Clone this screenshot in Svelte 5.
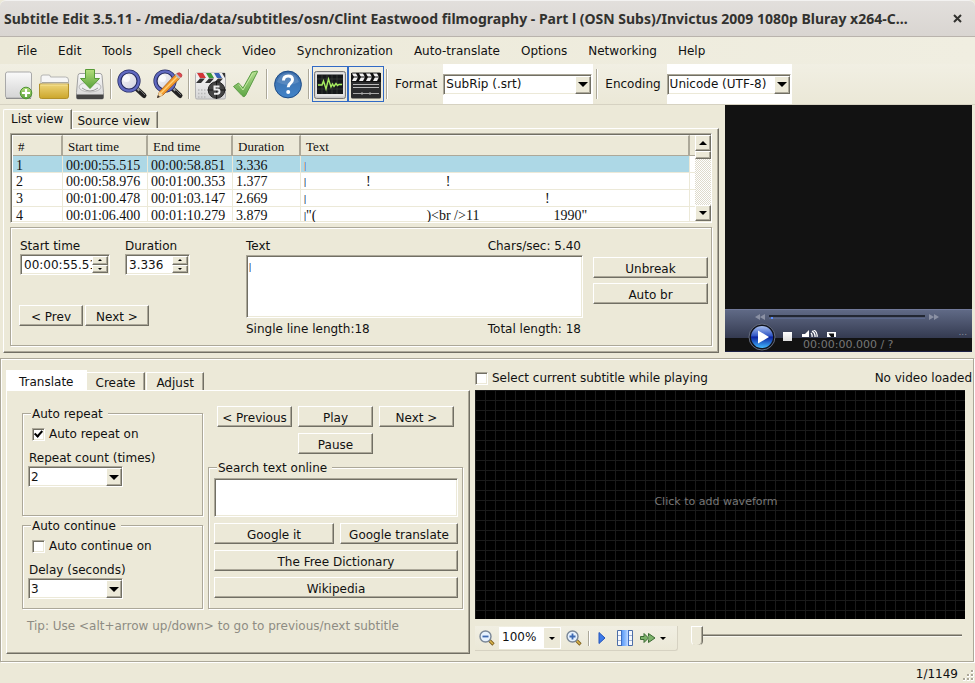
<script>
  const menus = ['File', 'Edit', 'Tools', 'Spell check', 'Video', 'Synchronization', 'Auto-translate', 'Options', 'Networking', 'Help'];

  const tools = [
    ['new', 'open', 'save'],
    ['find', 'replace'],
    ['sync', 'check'],
    ['help'],
    ['wave', 'video']
  ];

  const rows = [
    { n: 1, start: '00:00:55.515', end: '00:00:58.851', dur: '3.336', parts: [] },
    { n: 2, start: '00:00:58.976', end: '00:01:00.353', dur: '1.377', parts: [{ gap: 60, text: '!' }, { gap: 75, text: '!' }] },
    { n: 3, start: '00:01:00.478', end: '00:01:03.147', dur: '2.669', parts: [{ gap: 239, text: '!' }] },
    { n: 4, start: '00:01:06.400', end: '00:01:10.279', dur: '3.879', parts: [{ gap: 0, text: '"(' }, { gap: 110, text: ')<br />11' }, { gap: 74, text: '1990"' }] }
  ];

  let selected = $state(1);
  let startTime = $state('00:00:55.515');
  let duration = $state('3.336');
  let body = $state('');
  let query = $state('');
  let autoRepeat = $state(true);
  let autoContinue = $state(false);
  let follow = $state(false);
  let position = $state(0);
</script>

{#snippet combo(id, value, cls)}
  <span class="combo sunken {cls}">
    <select {id}><option>{value}</option></select>
    <span class="drop raised"><i class="down"></i></span>
  </span>
{/snippet}

{#snippet spinButtons(name)}
  <span class="spin">
    <button class="raised" aria-label="Increase {name}"><i class="up small"></i></button>
    <button class="raised" aria-label="Decrease {name}"><i class="down small"></i></button>
  </span>
{/snippet}

{#snippet icon(name)}
  <svg width="32" height="32" viewBox="0 0 32 32" aria-hidden="true">
    {#if name === 'new'}
      <rect x="3.5" y="4" width="26" height="26" rx="2" fill="url(#paper)" stroke="#a9a9a9" />
      <path d="M4 30.5h25" stroke="#8d8d8d" />
      <circle cx="24" cy="25" r="5.8" fill="url(#green)" stroke="#4f9334" />
      <path d="M24 21v8M20 25h8" stroke="#fff" stroke-width="2.2" />
    {:else if name === 'open'}
      <path d="M3 16V9q0-2 2-2h6q1.500 0 1.500 2h15q3 0 3 3v5z" fill="#f6f6f6" stroke="#b4b4b2" />
      <path d="M4 14.500h26" stroke="#aaa89e" />
      <path d="M1.500 16h29v12q0 2.500-2 2.500h-25q-2 0-2-2z" fill="url(#gold)" stroke="#b39129" />
      <path d="M2.500 17h27" stroke="#f6e49c" />
    {:else if name === 'save'}
      <path d="M4 7.500q.3-2 2-2h20q1.700 0 2 2l1.500 17v5q0 1.500-1.500 1.500H4q-1.500 0-1.500-1.500v-5z" fill="url(#paper)" stroke="#a0a0a0" />
      <ellipse cx="16" cy="19" rx="11" ry="5" fill="#eee" stroke="#bbb" />
      <path d="M2.500 26.500h27v3q0 1.500-1.500 1.500H4q-1.500 0-1.500-1.500z" fill="#444" />
      <path d="M8 20q8 6 16 0" fill="none" stroke="#999" />
      <path d="M11.500 1.500h9v9h5L16 20.500 6.500 10.500h5z" fill="url(#green)" stroke="#579b36" />
    {:else if name === 'find' || name === 'replace'}
      <path d="M21 21l7 6.500" stroke="#222" stroke-width="5" stroke-linecap="round" />
      <path d="M20 19l3.500 3.500" stroke="#999" stroke-width="2.500" />
      <path d="M23 21l6 6" stroke="#777" stroke-width="1" />
      <circle cx="13" cy="13" r="9.500" fill="url(#glass)" stroke="#262c62" stroke-width="4.200" />
      <circle cx="13" cy="13" r="9.700" fill="none" stroke="#6069c0" stroke-width="2.200" />
      <circle cx="10.500" cy="10.500" r="3.500" fill="#fff" opacity=".75" />
      {#if name === 'replace'}
        <path d="M5.500 29.500l2-6L23.500 6.500l4.200 4L11 27z" fill="#f39a2d" stroke="#a75e19" stroke-width=".8" />
        <path d="M9 25L25.500 8.500" stroke="#ffd277" stroke-width="1.500" />
        <path d="M5.500 29.500l2-6 3.500 3.500z" fill="#f2d6a2" />
        <path d="M5 30l1-3 2 2z" fill="#333" />
        <path d="M23 7l4 4 1.500-1.500-4-4z" fill="#b5bdc4" />
        <path d="M24.800 5.500l4 4q2-1.500 .7-3.500-2-2.400-4.700-.5z" fill="#df4850" stroke="#a72b31" stroke-width=".6" />
      {/if}
    {:else if name === 'sync'}
      <rect x="1.500" y="5" width="30" height="26" rx="1.500" fill="url(#paper)" stroke="#b2b2b2" />
      <path d="M2 5h29v5H2z" fill="#eee" />
      <path d="M3 5h6l3 5H6z" fill="#d23636" /><path d="M12 5h5l3 5h-5z" fill="#3c9938" /><path d="M20 5h5l3 5h-5z" fill="#3761b5" /><path d="M28 5h3v5z" fill="#333" />
      <path d="M6 10.500h5L7 15H2zM15 10.500h5L16 15h-5zM24 10.500h5L25 15h-5z" fill="#333" />
      <path d="M4 22h8M4 25.500h8M4 29h8" stroke="#b9b9b9" stroke-width="1.500" stroke-dasharray="1.500 1.500" />
      <circle cx="22.500" cy="22" r="8.300" fill="#444" stroke="#222" />
      <path d="M13.500 22h18.500M22.500 13v18" stroke="#171717" />
      <path d="M25.500 18.500h-5v3h3q2 0 2 2t-2 2.200h-3.500" fill="none" stroke="#eee" stroke-width="2" />
    {:else if name === 'check'}
      <path d="M3.500 18.500l5-3.500 4.500 5L22 4l5-1q.8 0 .4 1L15.500 27.500q-1.500 2.500-3.500 0z" fill="url(#tick)" stroke="#5b9c45" />
      <path d="M9 16.500l4 5.500L23 5" stroke="#c3e8a2" fill="none" />
    {:else if name === 'help'}
      <circle cx="16" cy="16.500" r="13.400" fill="url(#blue)" stroke="#1e4c87" />
      <path d="M5 14Q8 5 16 5t11 9Q16 20 5 14z" fill="#fff" opacity=".14" />
      <path d="M11.500 12.500q0-4.500 4.700-4.500 4.300 0 4.300 3.800 0 2-2.300 3.700-2 1.500-2 3.800" fill="none" stroke="#fff" stroke-width="3" />
      <circle cx="16.200" cy="24" r="2" fill="#fff" />
    {:else if name === 'wave'}
      <rect x=".5" y="3.500" width="31" height="27" rx="2" fill="#c9c9c9" stroke="#777" />
      <rect x="1.500" y="4.500" width="29" height="24" rx="1.500" fill="#e4e4e4" />
      <rect x="3" y="6.500" width="26" height="19.500" fill="#15181a" />
      <path d="M8 7v19M13 7v19M18 7v19M23 7v19M3 11h26M3 16h26M3 21h26" stroke="#394039" stroke-width=".7" />
      <path d="M4 17h4l1.500-4 2.500 8 2.500-10 2.500 8 1.500-3 1.500 2.500 2-3 1.500 2 1.500-1h3" fill="none" stroke="#a6ed5f" stroke-width="1.400" />
    {:else}
      <rect x="1" y="4.500" width="30" height="26" rx="1.500" fill="#2b2c2d" />
      <path d="M1 5h30v9H1z" fill="#111" />
      <path d="M2 5.500h4l2 3.500-2 4H2l2-4zM9 5.500h4l2 3.500-2 4H9l2-4zM16 5.500h4l2 3.500-2 4h-4l2-4zM23 5.500h4l2 3.500-2 4h-4l2-4z" fill="#f2f2f2" />
      <path d="M2 9h28" stroke="#111" />
      <path d="M3 16.500h26M3 19.500h26" stroke="#bbb" />
      <path d="M3 25.500h26M12 24v3M20 24v3" stroke="#aaa" />
    {/if}
  </svg>
{/snippet}

{#snippet lens(plus)}
  <svg width="16" height="16" viewBox="0 0 16 16" aria-hidden="true">
    <path d="M10 10l4.500 4.500" stroke="#7b5e1d" stroke-width="3.200" /><path d="M10.500 10.500l3.500 3.500" stroke="#ddb64d" stroke-width="1.600" />
    <circle cx="6.500" cy="6.500" r="5.500" fill="#e6f1fd" stroke="#7a8797" stroke-width="1.400" />
    <path d={plus ? 'M3.500 6.500h6M6.500 3.500v6' : 'M3.500 6.500h6'} stroke="#3d69b1" stroke-width="1.800" />
  </svg>
{/snippet}

<svg class="defs" aria-hidden="true">
  <defs>
    <linearGradient id="paper" x2="0" y2="1"><stop stop-color="#fafafa" /><stop offset="1" stop-color="#d4d4d4" /></linearGradient>
    <linearGradient id="green" x2="0" y2="1"><stop stop-color="#b4de7c" /><stop offset="1" stop-color="#58a13a" /></linearGradient>
    <linearGradient id="tick" x2="0" y2="1"><stop stop-color="#b2dd8f" /><stop offset="1" stop-color="#5ea645" /></linearGradient>
    <linearGradient id="gold" x2="0" y2="1"><stop stop-color="#efd579" /><stop offset="1" stop-color="#cba62b" /></linearGradient>
    <linearGradient id="blue" x2="0" y2="1"><stop stop-color="#3a6ba8" /><stop offset="1" stop-color="#4284c8" /></linearGradient>
    <linearGradient id="glass" x2="1" y2="1"><stop stop-color="#fafaf6" /><stop offset="1" stop-color="#cfcfe0" /></linearGradient>
    <linearGradient id="orb" x2="0" y2="1"><stop stop-color="#a9c0ef" /><stop offset=".45" stop-color="#2f55c4" /><stop offset=".5" stop-color="#0a1f9e" /><stop offset="1" stop-color="#43b9ff" /></linearGradient>
    <linearGradient id="strip" x2="1" y2="0"><stop stop-color="#5d9cf5" /><stop offset=".6" stop-color="#8fbcff" /><stop offset="1" stop-color="#c4dcff" /></linearGradient>
  </defs>
</svg>

<div class="app">
  <header class="title">
    <h1>Subtitle Edit 3.5.11 - /media/data/subtitles/osn/Clint Eastwood filmography - Part l (OSN Subs)/Invictus 2009 1080p Bluray x264-C…</h1>
    <button aria-label="Close">
      <svg width="9" height="9" viewBox="0 0 9 9"><path d="M1 1l7 7M8 1L1 8" stroke="#32322f" stroke-width="2" /></svg>
    </button>
  </header>

  <nav class="menu">
    {#each menus as m}<button>{m}</button>{/each}
  </nav>

  <div class="toolbar">
    {#each tools as group}
      {#each group as name}
        <button class="tool" class:on={name === 'wave' || name === 'video'} aria-label={name}>{@render icon(name)}</button>
      {/each}
      <i class="sep"></i>
    {/each}
    <label for="format">Format</label>
    <div class="well format">{@render combo('format', 'SubRip (.srt)', 'full')}</div>
    <i class="sep"></i>
    <label for="encoding">Encoding</label>
    <div class="well encoding">{@render combo('encoding', 'Unicode (UTF-8)', 'full')}</div>
  </div>

  <div class="upper">
    <section class="editor">
      <div class="tabs">
        <button class="tab active">List view</button>
        <button class="tab source">Source view</button>
      </div>
      <div class="page list-page">
        <div class="list sunken">
          <table>
            <colgroup><col class="c-n" /><col class="c-t" /><col class="c-t" /><col class="c-d" /><col /><col class="c-e" /></colgroup>
            <thead>
              <tr><th>#</th><th>Start time</th><th>End time</th><th>Duration</th><th>Text</th><th class="end" aria-hidden="true"></th></tr>
            </thead>
            <tbody>
              {#each rows as r}
                <tr class:selected={r.n === selected} onclick={() => (selected = r.n)}>
                  <td>{r.n}</td><td>{r.start}</td><td>{r.end}</td><td>{r.dur}</td>
                  <td><i class="glyph"></i>{#each r.parts as p}<span style="margin-left: {p.gap}px">{p.text}</span>{/each}</td>
                  <td class="end"></td>
                </tr>
              {/each}
            </tbody>
          </table>
          <div class="scroll">
            <button class="raised" aria-label="Scroll up"><i class="up"></i></button>
            <div class="thumb raised"></div>
            <button class="raised bottom" aria-label="Scroll down"><i class="down"></i></button>
          </div>
        </div>

        <div class="edit etched">
          <div class="times">
            <div class="fields">
              <div>
                <label for="start">Start time</label>
                <span class="spinner sunken wide"><input id="start" bind:value={startTime} />{@render spinButtons('start time')}</span>
              </div>
              <div>
                <label for="duration">Duration</label>
                <span class="spinner sunken"><input id="duration" bind:value={duration} />{@render spinButtons('duration')}</span>
              </div>
            </div>
            <div class="nav">
              <button class="btn raised">&lt; Prev</button>
              <button class="btn raised">Next &gt;</button>
            </div>
          </div>
          <div class="text">
            <div class="between head"><label for="body">Text</label><span>Chars/sec: 5.40</span></div>
            <div class="area">
              <textarea id="body" class="sunken" bind:value={body}></textarea>
              <i class="glyph"></i>
            </div>
            <div class="between"><span>Single line length:18</span><span>Total length: 18</span></div>
          </div>
          <div class="breaks">
            <button class="btn raised">Unbreak</button>
            <button class="btn raised">Auto br</button>
          </div>
        </div>
      </div>
    </section>

    <section class="player">
      <div class="screen"></div>
      <div class="controls">
        <div class="seek">
          <svg width="10" height="6" viewBox="0 0 10 6"><path d="M5 0v6L0 3zM10 0v6L5 3z" fill="#8b91a4" /></svg>
          <div class="track"><i></i></div>
          <svg width="10" height="6" viewBox="0 0 10 6"><path d="M0 0v6l5-3zM5 0v6l5-3z" fill="#8b91a4" /></svg>
        </div>
        <div class="playrow">
          <button class="play" aria-label="Play video">
            <svg width="28" height="28" viewBox="0 0 28 28">
              <circle cx="14" cy="14" r="13" fill="#10131c" stroke="#666d80" />
              <circle cx="14" cy="14" r="11" fill="url(#orb)" />
              <path d="M10 7.500l11 6.500-11 6.500z" fill="#fff" />
            </svg>
          </button>
          <button class="stop" aria-label="Stop"></button>
          <svg class="speaker" width="16" height="7" viewBox="0 0 16 7"><path d="M0 4h3l4-4v7H0z" fill="#fff" /><path d="M9 3q1.500 1.500 1 4M10 1q3.500 2 3 6M11-.5q5 2.500 4 7.500" fill="none" stroke="#fff" stroke-width="1.300" /></svg>
          <svg class="full-screen" width="9" height="5" viewBox="0 0 9 5"><path d="M0 0h9v5H0z" fill="#fff" /><path d="M1.500 1.500H7V5H4z" fill="#111" /></svg>
          <span class="dots">...</span>
        </div>
        <div class="clock">00:00:00.000 / ?</div>
      </div>
    </section>
  </div>

  <div class="lower etched">
    <section class="assist">
      <div class="tabs">
        <button class="tab white">Translate</button>
        <button class="tab">Create</button>
        <button class="tab">Adjust</button>
      </div>
      <div class="page assist-page">
        <div class="cols">
          <div class="auto">
            <fieldset class="repeat">
              <legend>Auto repeat</legend>
              <label class="check"><input type="checkbox" bind:checked={autoRepeat} />Auto repeat on</label>
              <label class="cap" for="count">Repeat count (times)</label>
              {@render combo('count', '2', 'short')}
            </fieldset>
            <fieldset class="continue">
              <legend>Auto continue</legend>
              <label class="check"><input type="checkbox" bind:checked={autoContinue} />Auto continue on</label>
              <label class="cap" for="delay">Delay (seconds)</label>
              {@render combo('delay', '3', 'short')}
            </fieldset>
          </div>
          <div class="right">
            <div class="plays">
              <button class="btn raised">&lt; Previous</button>
              <button class="btn raised">Play</button>
              <button class="btn raised">Next &gt;</button>
              <button class="btn raised pause">Pause</button>
            </div>
            <fieldset class="search">
              <legend>Search text online</legend>
              <textarea class="sunken" aria-label="Search text online" bind:value={query}></textarea>
              <div class="pair">
                <button class="btn raised">Google it</button>
                <button class="btn raised">Google translate</button>
              </div>
              <button class="btn raised">The Free Dictionary</button>
              <button class="btn raised">Wikipedia</button>
            </fieldset>
          </div>
        </div>
        <p class="tip">Tip: Use &lt;alt+arrow up/down&gt; to go to previous/next subtitle</p>
      </div>
    </section>

    <section class="wave">
      <div class="wave-head">
        <label class="check"><input type="checkbox" bind:checked={follow} />Select current subtitle while playing</label>
        <span>No video loaded</span>
      </div>
      <button class="waveform">Click to add waveform</button>
      <div class="wave-foot">
        <div class="mini">
          <button aria-label="Zoom out">{@render lens(false)}</button>
          <span class="zoom">
            <select aria-label="Zoom"><option>100%</option></select>
            <span class="flat"><i class="down"></i></span>
          </span>
          <button aria-label="Zoom in">{@render lens(true)}</button>
          <i class="sep"></i>
          <button aria-label="Play">
            <svg width="16" height="16" viewBox="0 0 16 16"><path d="M5 2.500l6 5.500-6 5.500z" fill="#3d7ae8" stroke="#2455bb" /></svg>
          </button>
          <button aria-label="Center on position">
            <svg width="16" height="16" viewBox="0 0 16 16"><path d="M.5 .5h15v15H.5z" fill="#f6f8fc" stroke="#4c6ea8" /><path d="M1 5.500h14M1 10.500h14" stroke="#9db0cf" /><path d="M5 0h6v16H5z" fill="url(#strip)" /><path d="M4.500 0v16M11.500 0v16" stroke="#3e6dc4" /></svg>
          </button>
          <button class="speed" aria-label="Playback speed">
            <svg width="16" height="12" viewBox="0 0 16 12"><path d="M.5 4.500H4V1.500L8.500 6 4 10.500v-3H.5z M8.500 4.500V1.500L15 6l-6.500 4.500v-3" fill="#7cb26a" stroke="#3c6b34" /></svg>
            <i class="down"></i>
          </button>
        </div>
        <input class="slider" type="range" aria-label="Position" min="0" max="100" bind:value={position} />
      </div>
    </section>
  </div>

  <footer class="status">
    <span>1/1149</span>
    <svg width="12" height="12" viewBox="0 0 12 12" aria-hidden="true"><path d="M9 0h2v2H9zM9 4h2v2H9zM5 4h2v2H5zM9 8h2v2H9zM5 8h2v2H5zM1 8h2v2H1z" fill="#aca899" /><path d="M9 2.500h2.500V0M9 6.500h2.500V4M5 6.500h2.500V4M9 10.500h2.500V8M5 10.500h2.500V8M1 10.500h2.500V8" fill="none" stroke="#fff" /></svg>
  </footer>
</div>

<style>
  :global(body) { background: #ece9d8; }
  * { box-sizing: border-box; }
  button, input, select, textarea { font: inherit; color: inherit; margin: 0; padding: 0; border: 0; border-radius: 0; background: none; outline: 0; }
  svg { display: block; flex: none; }
  .defs { position: absolute; width: 0; height: 0; }

  .app {
    display: flex; flex-direction: column; min-height: 100vh;
    background: #ece9d8; color: #111;
    font: 12px/16px "DejaVu Sans", sans-serif;
  }
  .raised { background: #ece9d8; border: 1px solid; border-color: #fff #716f64 #716f64 #fff; box-shadow: inset -1px -1px #aca899; }
  .sunken { background: #fff; border: 1px solid; border-color: #aca899 #fff #fff #aca899; box-shadow: inset 1px 1px #716f64, inset -1px -1px #ece9d8; }
  .etched, fieldset { border: 1px solid #aca899; box-shadow: inset 1px 1px #fff, 1px 1px #fff; }
  .down, .up { display: block; width: 0; height: 0; border: 5px solid transparent; border-bottom: 0; border-top-color: #000; }
  .scroll .down { border-width: 4px 4px 0; }
  .up { border-width: 0 4px 4px; border-top: 0; border-bottom: 4px solid #000; }
  .down.small { border-width: 2px 2px 0; }
  .up.small { border-width: 0 2px 2px; }

  .title { display: flex; align-items: center; height: 37px; padding: 0 13px 0 4px; gap: 8px; background: linear-gradient(#e2dfdc, #d9d5d1); border-top: 1px solid #f3f2f1; border-bottom: 1px solid #b9b3ac; border-radius: 6px 6px 0 0; }
  h1 { flex: 1; min-width: 0; margin: 0; overflow: hidden; white-space: nowrap; font: bold 14px/20px "Noto Sans", sans-serif; color: #32322f; }

  .menu { display: flex; gap: 1px; height: 27px; padding: 0 7px; background: linear-gradient(90deg, #ece9d8, #f0eee1); }
  .menu button { padding: 0 10px; }

  .toolbar { display: flex; align-items: center; height: 41px; background: linear-gradient(#f1efe3, #ebe8d7); border-bottom: 1px solid #d6d2c2; }
  .tool { width: 36px; height: 36px; flex: none; padding: 1px; border: 1px solid transparent; }
  .tool.on { border-color: #316ac5; }
  .sep { flex: none; width: 2px; height: 30px; margin: 0 2px; border-left: 1px solid #aca899; border-right: 1px solid #fff; }
  .toolbar label { padding: 0 5px; }
  .well { align-self: stretch; display: flex; align-items: center; padding: 0 1px 0 0; margin: 0 1px; background: #fff; }
  .format { width: 150px; }
  .encoding { width: 125px; }

  .combo { position: relative; display: block; height: 21px; }
  .combo.full { width: 100%; }
  .combo.short { width: 95px; }
  .combo select { appearance: none; width: 100%; height: 19px; padding: 0 18px 0 2px; line-height: 18px; }
  .drop { position: absolute; top: 1px; right: 0; bottom: 0; width: 16px; display: grid; place-items: center; pointer-events: none; }

  .upper { display: flex; padding-right: 3px; }
  .editor { flex: 1; min-width: 0; padding: 4px 6px 0 3px; }
  .tabs { display: flex; align-items: flex-end; }
  .tab { height: 17px; padding: 2px 7px 0; border: 1px solid; border-color: #fff #716f64 transparent #fff; box-shadow: inset -1px 0 #aca899; border-bottom: 0; line-height: 14px; }
  .editor .tab.active { height: 20px; padding: 0 8px 2px 7px; margin-bottom: -1px; background: #ece9d8; border-top-left-radius: 2px; z-index: 1; }
  .editor .tab.source { padding: 1px 7px 0 4px; }
  .page { border: 1px solid; border-color: #fff #716f64 #716f64 #fff; box-shadow: inset -1px -1px #aca899; }
  .list-page { padding: 4px 6px 6px; }

  .list { display: flex; height: 90px; padding: 1px 0 1px 2px; overflow: hidden; }
  table { flex: 1; min-width: 0; table-layout: fixed; border-collapse: separate; border-spacing: 0; font: 14px/16px "Liberation Serif", serif; white-space: nowrap; height: 88px; }
  .c-n { width: 50px; } .c-t { width: 85px; } .c-d { width: 68px; } .c-e { width: 5px; }
  th { height: 21px; padding: 2px 0 0 5px; font-weight: normal; font-size: 13px; text-align: left; background: #ece9d8; border-right: 2px solid #aca899; border-bottom: 1px solid #aca899; border-top: 1px solid #f8f7f2; }
  td { height: 17px; padding: 2px 0 0 3px; border-right: 1px solid #ece9d8; border-bottom: 1px solid #ece9d8; overflow: hidden; line-height: 14px; }
  th.end, td.end { padding: 0; border-right: 0; }
  .selected td { padding-top: 3px; line-height: 13px; }
  .selected td:not(.end) { background: #add8e6; }
  .glyph { display: inline-block; width: 2px; height: 9px; background: linear-gradient(90deg, #dfb690 50%, #69a9ea 50%); vertical-align: -1px; }
  .scroll { display: flex; flex-direction: column; width: 16px; flex: none; background: repeating-conic-gradient(#fff 0 25%, #dedacb 0 50%) 0 0 / 2px 2px; }
  .scroll button { width: 16px; height: 16px; display: grid; place-items: center; }
  .thumb { height: 8px; }
  .bottom { margin-top: auto; }

  .edit { display: flex; margin-top: 4px; height: 119px; padding: 11px 3px 0 8px; }
  .edit label, .times span { display: block; }
  .fields label, .head { line-height: 15px; }
  .times { width: 227px; flex: none; }
  .fields { display: flex; gap: 15px; padding-left: 1px; }
  .spinner { display: flex !important; width: 65px; height: 21px; padding: 1px; }
  .spinner.wide { width: 90px; }
  .spinner input { flex: 1; min-width: 0; padding-left: 2px; }
  .spin { display: flex !important; flex-direction: column; width: 16px; }
  .spin button { flex: 1; width: 16px; display: grid; place-items: center; }
  .nav { display: flex; gap: 2px; margin-top: 30px; }
  .nav .btn { width: 64px; }
  .btn { height: 21px; padding: 3px 0 0; line-height: 15px; white-space: nowrap; text-align: center; overflow: hidden; }
  .text { flex: 1; min-width: 0; }
  .between { display: flex; justify-content: space-between; padding-right: 2px; }
  .area { position: relative; margin: 1px 0 3px; }
  .area textarea { display: block; width: 100%; height: 63px; padding: 3px; resize: none; }
  .area .glyph { position: absolute; left: 3px; top: 8px; }
  .breaks { display: flex; flex-direction: column; gap: 5px; width: 115px; margin: 18px 0 0 10px; }

  .player { width: 247px; flex: none; height: 247px; display: flex; flex-direction: column; background: #121212; }
  .screen { flex: 1; }
  .controls { height: 43px; background: linear-gradient(#606a86, #343a50 28px, #121212 28px); border-bottom: 1px solid #1c2146; border-top: 1px solid #71799a; }
  .seek { display: flex; align-items: center; gap: 4px; height: 13px; padding: 0 33px 0 30px; }
  .track { flex: 1; height: 4px; border-top: 2px solid #222733; border-bottom: 1px solid #5b688c; }
  .track i { display: block; width: 2px; height: 2px; margin-left: 2px; background: #5b8eff; }
  .playrow { position: relative; display: flex; height: 14px; padding-left: 23px; }
  .play { position: relative; height: 28px; width: 28px; z-index: 1; }
  .stop { width: 9px; height: 9px; margin: 9px 0 0 7px; background: linear-gradient(#fff, #ddd); z-index: 1; }
  .speaker { margin: 7px 9px 0 10px; }
  .full-screen { margin-top: 9px; }
  .dots { margin: 0 5px 0 auto; line-height: 18px; color: #8a8f9d; font-size: 9px; }
  .clock { padding-left: 78px; line-height: 15px; font-size: 11px; color: #777; }

  .lower { display: flex; margin: 5px 1px 0 0; height: 304px; }
  .assist { width: 464px; flex: none; margin: 11px 5px 0 5px; }
  .assist .tab { height: 18px; padding: 2px 9px 0; margin-right: 1px; }
  .assist .tab.white { height: 20px; padding: 3px 12px 1px; background: #fff; border-color: #fff; box-shadow: none; margin-right: -1px; }
  .assist-page { height: 264px; padding: 13px 6px 0 15px; }
  .cols { display: flex; gap: 5px; }
  fieldset { position: relative; margin: 0; min-width: 0; }
  legend { position: absolute; top: -8px; left: 8px; padding: 0 5px 0 1px; background: #ece9d8; }
  .auto { width: 181px; flex: none; padding-top: 9px; display: flex; flex-direction: column; gap: 9px; }
  .auto fieldset { padding: 12px 5px 0; }
  .repeat { height: 103px; }
  .continue { height: 84px; }
  .check { display: flex; align-items: center; gap: 4px; }
  .check input { appearance: none; width: 13px; height: 13px; background: #fff; border: 1px solid; border-color: #aca899 #fff #fff #aca899; box-shadow: inset 1px 1px #716f64, inset -1px -1px #ece9d8; }
  .check input:checked { position: relative; }
  .check input:checked::after { content: ""; position: absolute; left: 3px; top: 0; width: 3px; height: 6px; border: solid #000; border-width: 0 2px 2px 0; transform: rotate(42deg); }
  .auto .check { padding-left: 4px; }
  .cap { display: block; margin: 8px 0 0 1px; }
  .right { flex: 1; min-width: 0; padding-top: 2px; }
  .plays { display: grid; grid-template-columns: repeat(3, 75px); gap: 6px; padding-left: 9px; }
  .pause { grid-column: 2; }
  .search { display: flex; flex-direction: column; gap: 6px; height: 142px; margin-top: 13px; padding: 10px 4px 0 5px; }
  .search textarea { height: 39px; flex: none; resize: none; padding: 3px; }
  .pair { display: grid; grid-template-columns: 120fr 118fr; gap: 6px; }
  .tip { margin: 9px 0 0 5px; color: #8e8c83; }

  .wave { flex: 1; min-width: 0; padding-top: 11px; }
  .wave-head { display: flex; justify-content: space-between; height: 20px; padding-right: 1px; }
  .wave-head .check { height: 16px; }
  .waveform { display: block; width: calc(100% - 8px); height: 229px; padding: 0 8px 6px 0; color: #777; font-size: 11px; background: linear-gradient(#1a1a1a 1px, transparent 1px) 0 0 / 10px 10px, linear-gradient(90deg, #1a1a1a 1px, transparent 1px) 0 0 / 10px 10px, #000; }
  .wave-foot { display: flex; align-items: flex-start; padding: 7px 11px 0 0; gap: 13px; }
  .mini { display: flex; align-items: center; width: 203px; height: 25px; padding-left: 4px; flex: none; background: linear-gradient(#f1efe3, #ebe8d7); border-bottom: 1px solid #d6d2c2; border-right: 1px solid #d6d2c2; border-radius: 0 0 3px 0; }
  .mini button { display: flex; align-items: center; margin-right: 7px; }
  .zoom { display: flex; position: relative; width: 62px; height: 22px; margin: 0 5px 0 -3px; background: #fff; }
  .zoom select { appearance: none; width: 100%; padding: 0 0 2px 3px; }
  .flat { position: absolute; top: 1px; right: 1px; bottom: 1px; width: 16px; display: grid; place-items: center; background: #ece9d8; pointer-events: none; }
  .mini .sep { height: 15px; margin: 0 4px 0 -1px; }
  .speed { gap: 4px; }
  .mini .down, .flat .down { border-width: 3px 3px 0; }
  .slider { appearance: none; flex: 1; min-width: 0; height: 20px; background: linear-gradient(#aca899 1px, #716f64 1px, #716f64 2px, #f8f7f0 2px) 0 8px / 100% 3px no-repeat; }
  .slider::-webkit-slider-thumb { appearance: none; width: 12px; height: 20px; background: #ece9d8; border: 1px solid; border-color: #fff #716f64 transparent #fff; border-radius: 0 0 5px 5px; box-shadow: inset -1px 0 #aca899; }

  .status { display: flex; align-items: flex-end; justify-content: flex-end; gap: 4px; flex: 1; min-height: 21px; padding: 0 1px 1px; }
</style>
